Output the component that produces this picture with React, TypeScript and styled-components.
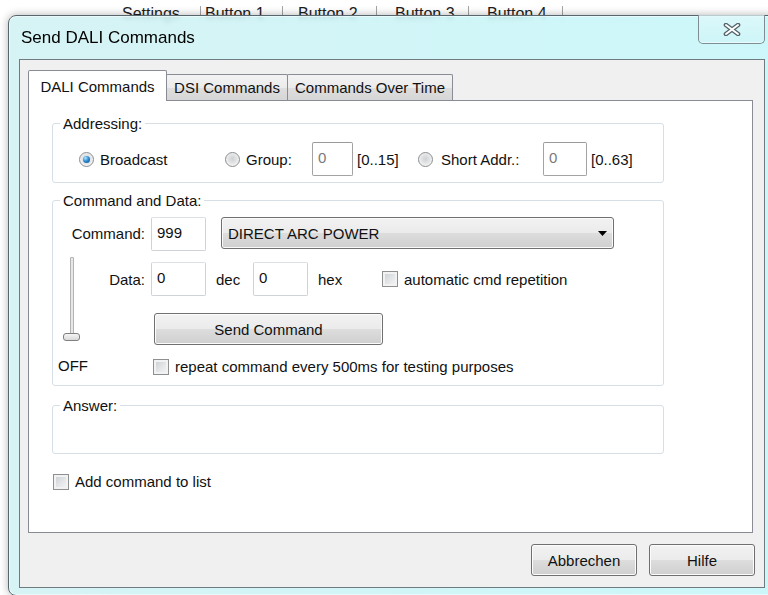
import styled, { createGlobalStyle } from "styled-components";

const GlobalStyle = createGlobalStyle`
  html, body {
    margin: 0;
    padding: 0;
    background: #fff;
  }
  body {
    font-family: "Liberation Sans", Arial, sans-serif;
    font-size: 15px;
    color: #111;
  }
`;

const toolItems = [
  { label: "Settings", w: 78, pad: 0 },
  { label: "Button 1", w: 81, pad: 4 },
  { label: "Button 2", w: 93, pad: 15 },
  { label: "Button 3", w: 91, pad: 18 },
  { label: "Button 4", w: 93, pad: 18 },
];

export default function App() {
  return (
    <Screen>
      <GlobalStyle />
      <BackToolbar>
        {toolItems.map((t) => (
          <ToolGroup key={t.label}>
            <ToolItem $w={t.w} $pad={t.pad}>{t.label}</ToolItem>
            <ToolSep />
          </ToolGroup>
        ))}
      </BackToolbar>

      <Dialog>
        <TitleBar>
          <Title>Send DALI Commands</Title>
          <CloseButton>
            <svg width="18" height="13" viewBox="0 0 18 13">
              <path d="M3 2 L15 11 M15 2 L3 11" stroke="#55636a" strokeWidth="4.6" strokeLinecap="round" fill="none" />
              <path d="M3 2 L15 11 M15 2 L3 11" stroke="#ffffff" strokeWidth="2" strokeLinecap="round" fill="none" />
            </svg>
          </CloseButton>
        </TitleBar>

        <Client>
          <TabStrip>
            <Tab $active $w={139}>DALI Commands</Tab>
            <Tab $w={122}>DSI Commands</Tab>
            <Tab $w={166}>Commands Over Time</Tab>
          </TabStrip>

          <TabPage>
            <Group $h={60}>
              <Legend>Addressing:</Legend>
              <AddressRow>
                <Option $w={146}>
                  <Radio $on />
                  Broadcast
                </Option>
                <Option $w={87}>
                  <Radio />
                  Group:
                </Option>
                <NumInput $w={41} $dim>0</NumInput>
                <Range $w={65}>[0..15]</Range>
                <Option $w={125} $gap={8}>
                  <Radio />
                  Short Addr.:
                </Option>
                <NumInput $w={44} $dim>0</NumInput>
                <Range $w={50}>[0..63]</Range>
              </AddressRow>
            </Group>

            <Group $h={186} $mt={17}>
              <Legend>Command and Data:</Legend>
              <CmdRow>
                <FieldLabel $w={92}>Command:</FieldLabel>
                <NumInput $w={55} $ml={6}>999</NumInput>
                <Select>
                  DIRECT ARC POWER
                  <svg width="9" height="5" viewBox="0 0 9 5">
                    <polygon points="0,0 9,0 4.5,5" fill="#000" />
                  </svg>
                </Select>
              </CmdRow>

              <CmdBody>
                <SliderCol>
                  <Slider>
                    <Track />
                    <Thumb />
                  </Slider>
                  <OffLabel>OFF</OffLabel>
                </SliderCol>

                <RightCol>
                  <DataRow>
                    <FieldLabel $w={47}>Data:</FieldLabel>
                    <NumInput $w={55} $ml={6}>0</NumInput>
                    <Unit $w={47}>dec</Unit>
                    <NumInput $w={55}>0</NumInput>
                    <Unit $w={74}>hex</Unit>
                    <CheckRow>
                      <CheckBox />
                      automatic cmd repetition
                    </CheckRow>
                  </DataRow>

                  <PushButton $w={229} $ml={56} $mt={17}>Send Command</PushButton>

                  <CheckRow $ml={55} $mt={13}>
                    <CheckBox />
                    repeat command every 500ms for testing purposes
                  </CheckRow>
                </RightCol>
              </CmdBody>
            </Group>

            <Group $h={49} $mt={19}>
              <Legend>Answer:</Legend>
            </Group>

            <CheckRow $ml={1} $mt={19}>
              <CheckBox />
              Add command to list
            </CheckRow>
          </TabPage>

          <DialogButtons>
            <PushButton $w={106}>Abbrechen</PushButton>
            <PushButton $w={106}>Hilfe</PushButton>
          </DialogButtons>
        </Client>
      </Dialog>
    </Screen>
  );
}

const Screen = styled.div`
  position: relative;
  width: 768px;
  height: 595px;
  overflow: hidden;
  background: #fff;
`;

/* host application toolbar, mostly hidden behind the dialog */
const BackToolbar = styled.div`
  display: flex;
  align-items: center;
  height: 20px;
  padding: 4px 0 0 122px;
  font-size: 16px;
  line-height: 20px;
  color: #1e1e1e;
`;

const ToolGroup = styled.div`
  display: flex;
  align-items: center;
`;

const ToolItem = styled.span<{ $w: number; $pad: number }>`
  width: ${(p) => p.$w}px;
  padding-left: ${(p) => p.$pad}px;
  box-sizing: border-box;
  white-space: nowrap;
`;

const ToolSep = styled.span`
  width: 1px;
  height: 16px;
  background: #a4a4a4;
`;

const Dialog = styled.div`
  position: absolute;
  top: 15px;
  left: 8px;
  width: 768px;
  height: 581px;
  box-sizing: border-box;
  display: flex;
  flex-direction: column;
  padding: 0 10px 7px 10px;
  border: 1px solid #56666c;
  border-radius: 8px;
  background: linear-gradient(90deg, rgba(208, 241, 243, 0.86), rgba(196, 246, 249, 0.86));
  backdrop-filter: blur(2.5px);
  box-shadow: 0 0 8px rgba(0, 0, 0, 0.3), inset 0 0 0 1px rgba(255, 255, 255, 0.5);
`;

const TitleBar = styled.div`
  display: flex;
  align-items: flex-start;
  height: 43px;
`;

const Title = styled.div`
  padding-left: 2px;
  font-size: 17px;
  line-height: 43px;
  color: #000;
`;

const CloseButton = styled.div`
  margin: -1px 0 0 auto;
  width: 67px;
  height: 29px;
  box-sizing: border-box;
  display: flex;
  align-items: center;
  justify-content: center;
  border: 1px solid #7d8d93;
  border-top: none;
  border-radius: 0 0 5px 5px;
  background: linear-gradient(180deg, rgba(226, 248, 250, 0.7), rgba(206, 244, 247, 0.7));
  box-shadow: inset 0 -1px 0 rgba(255, 255, 255, 0.6);
`;

const Client = styled.div`
  height: 529px;
  box-sizing: border-box;
  display: flex;
  flex-direction: column;
  padding: 10px 11px 0 8px;
  border: 1px solid #6e7b80;
  background: #f0f0f0;
`;

const TabStrip = styled.div`
  position: relative;
  z-index: 1;
  display: flex;
  align-items: flex-end;
  height: 31px;
  margin-bottom: -1px;
`;

const Tab = styled.div<{ $active?: boolean; $w: number }>`
  width: ${(p) => p.$w}px;
  height: ${(p) => (p.$active ? 31 : 26)}px;
  margin-bottom: ${(p) => (p.$active ? 0 : 1)}px;
  margin-right: -1px;
  box-sizing: border-box;
  display: flex;
  align-items: center;
  justify-content: center;
  border: 1px solid #898c95;
  border-bottom: none;
  border-radius: 2px 2px 0 0;
  background: ${(p) =>
    p.$active ? "#fff" : "linear-gradient(180deg, #f3f3f3 0%, #ebebeb 50%, #dedede 51%, #d6d6d6 100%)"};
  white-space: nowrap;
`;

const TabPage = styled.div`
  width: 725px;
  height: 433px;
  box-sizing: border-box;
  display: flex;
  flex-direction: column;
  align-items: flex-start;
  padding: 22px 0 0 23px;
  border: 1px solid #898c95;
  background: #fff;
`;

const Group = styled.div<{ $h: number; $mt?: number }>`
  width: 612px;
  height: ${(p) => p.$h}px;
  margin-top: ${(p) => p.$mt ?? 0}px;
  box-sizing: border-box;
  border: 1px solid #d5dfe5;
  border-radius: 3px;
`;

const Legend = styled.div`
  width: fit-content;
  height: 17px;
  margin: -9px 0 0 7px;
  padding: 0 3px;
  line-height: 17px;
  background: #fff;
`;

const AddressRow = styled.div`
  display: flex;
  align-items: center;
  height: 34px;
  margin-top: 10px;
  padding-left: 26px;
`;

const Option = styled.label<{ $w: number; $gap?: number }>`
  width: ${(p) => p.$w}px;
  display: flex;
  align-items: center;
  gap: ${(p) => p.$gap ?? 6}px;
  white-space: nowrap;
`;

const Radio = styled.span<{ $on?: boolean }>`
  width: 15px;
  height: 15px;
  flex: none;
  box-sizing: border-box;
  display: flex;
  align-items: center;
  justify-content: center;
  border: 1px solid #8a8c8e;
  border-radius: 50%;
  background: radial-gradient(circle at 50% 45%, #cfd1d3 0, #e3e4e5 45%, #fafafa 80%);

  &::after {
    content: "";
    display: ${(p) => (p.$on ? "block" : "none")};
    width: 7px;
    height: 7px;
    border-radius: 50%;
    background: radial-gradient(circle at 35% 30%, #b4e6ff 0, #2f8fd8 45%, #0d4474 100%);
  }
`;

const NumInput = styled.div<{ $w: number; $dim?: boolean; $ml?: number }>`
  width: ${(p) => p.$w}px;
  height: 34px;
  margin-left: ${(p) => p.$ml ?? 0}px;
  box-sizing: border-box;
  padding: 0 5px;
  line-height: 30px;
  border: 1px solid ${(p) => (p.$dim ? "#a3a3a3" : "#cfd3d7")};
  border-top-color: ${(p) => (p.$dim ? "#9a9a9a" : "#dde1e5")};
  border-radius: 2px;
  background: #fff;
  color: ${(p) => (p.$dim ? "#7a7a7a" : "#111")};
`;

const Range = styled.span<{ $w: number }>`
  width: ${(p) => p.$w}px;
  padding-left: 4px;
  box-sizing: border-box;
  white-space: nowrap;
`;

const CmdRow = styled.div`
  display: flex;
  align-items: flex-start;
  margin-top: 8px;
`;

const FieldLabel = styled.span<{ $w: number }>`
  width: ${(p) => p.$w}px;
  text-align: right;
  line-height: 33px;
  flex: none;
`;

const Select = styled.div`
  width: 393px;
  height: 32px;
  margin-left: 15px;
  box-sizing: border-box;
  display: flex;
  align-items: center;
  justify-content: space-between;
  padding: 0 6px 0 6px;
  border: 1px solid #707070;
  border-radius: 3px;
  background: linear-gradient(180deg, #f2f2f2 0%, #ebebeb 50%, #dddddd 51%, #cfcfcf 100%);
  box-shadow: inset 0 0 0 1px #fafafa;
`;

const CmdBody = styled.div`
  display: flex;
  margin-top: 6px;
`;

const SliderCol = styled.div`
  width: 45px;
  display: flex;
  flex-direction: column;
  align-items: flex-start;
  padding-left: 5px;
  box-sizing: border-box;
`;

const Slider = styled.div`
  width: 17px;
  margin-left: 5px;
  display: flex;
  flex-direction: column;
  align-items: center;
`;

const Track = styled.div`
  width: 4px;
  height: 78px;
  box-sizing: border-box;
  border: 1px solid #b3b3b3;
  border-radius: 1px;
  background: #e7e7e7;
`;

const Thumb = styled.div`
  width: 17px;
  height: 8px;
  margin-top: -2px;
  box-sizing: border-box;
  border: 1px solid #7f7f7f;
  border-radius: 3px;
  background: linear-gradient(180deg, #f5f5f5, #d9d9d9);
`;

const OffLabel = styled.span`
  margin-top: 16px;
  line-height: 17px;
`;

const RightCol = styled.div`
  display: flex;
  flex-direction: column;
  align-items: flex-start;
  padding-top: 5px;
`;

const DataRow = styled.div`
  display: flex;
  align-items: center;
  height: 34px;
`;

const Unit = styled.span<{ $w: number }>`
  width: ${(p) => p.$w}px;
  padding-left: 10px;
  box-sizing: border-box;
  flex: none;
`;

const CheckRow = styled.label<{ $ml?: number; $mt?: number }>`
  display: flex;
  align-items: center;
  gap: 6px;
  margin-left: ${(p) => p.$ml ?? 0}px;
  margin-top: ${(p) => p.$mt ?? 0}px;
  line-height: 17px;
  white-space: nowrap;
`;

const CheckBox = styled.span`
  width: 16px;
  height: 16px;
  flex: none;
  box-sizing: border-box;
  border: 1px solid #8e8f8f;
  background: linear-gradient(135deg, #c8ccd1 0%, #e4e6e8 55%, #f6f6f6 100%);
  box-shadow: inset 0 0 0 2px #f2f2f2;
`;

const PushButton = styled.div<{ $w: number; $ml?: number; $mt?: number }>`
  width: ${(p) => p.$w}px;
  height: 32px;
  margin-left: ${(p) => p.$ml ?? 0}px;
  margin-top: ${(p) => p.$mt ?? 0}px;
  box-sizing: border-box;
  display: flex;
  align-items: center;
  justify-content: center;
  border: 1px solid #707070;
  border-radius: 3px;
  background: linear-gradient(180deg, #f2f2f2 0%, #ebebeb 50%, #dddddd 51%, #cfcfcf 100%);
  box-shadow: inset 0 0 0 1px #fcfcfc;
  color: #111;
`;

const DialogButtons = styled.div`
  display: flex;
  justify-content: flex-end;
  gap: 12px;
  margin: 11px -2px 0 0;
`;
